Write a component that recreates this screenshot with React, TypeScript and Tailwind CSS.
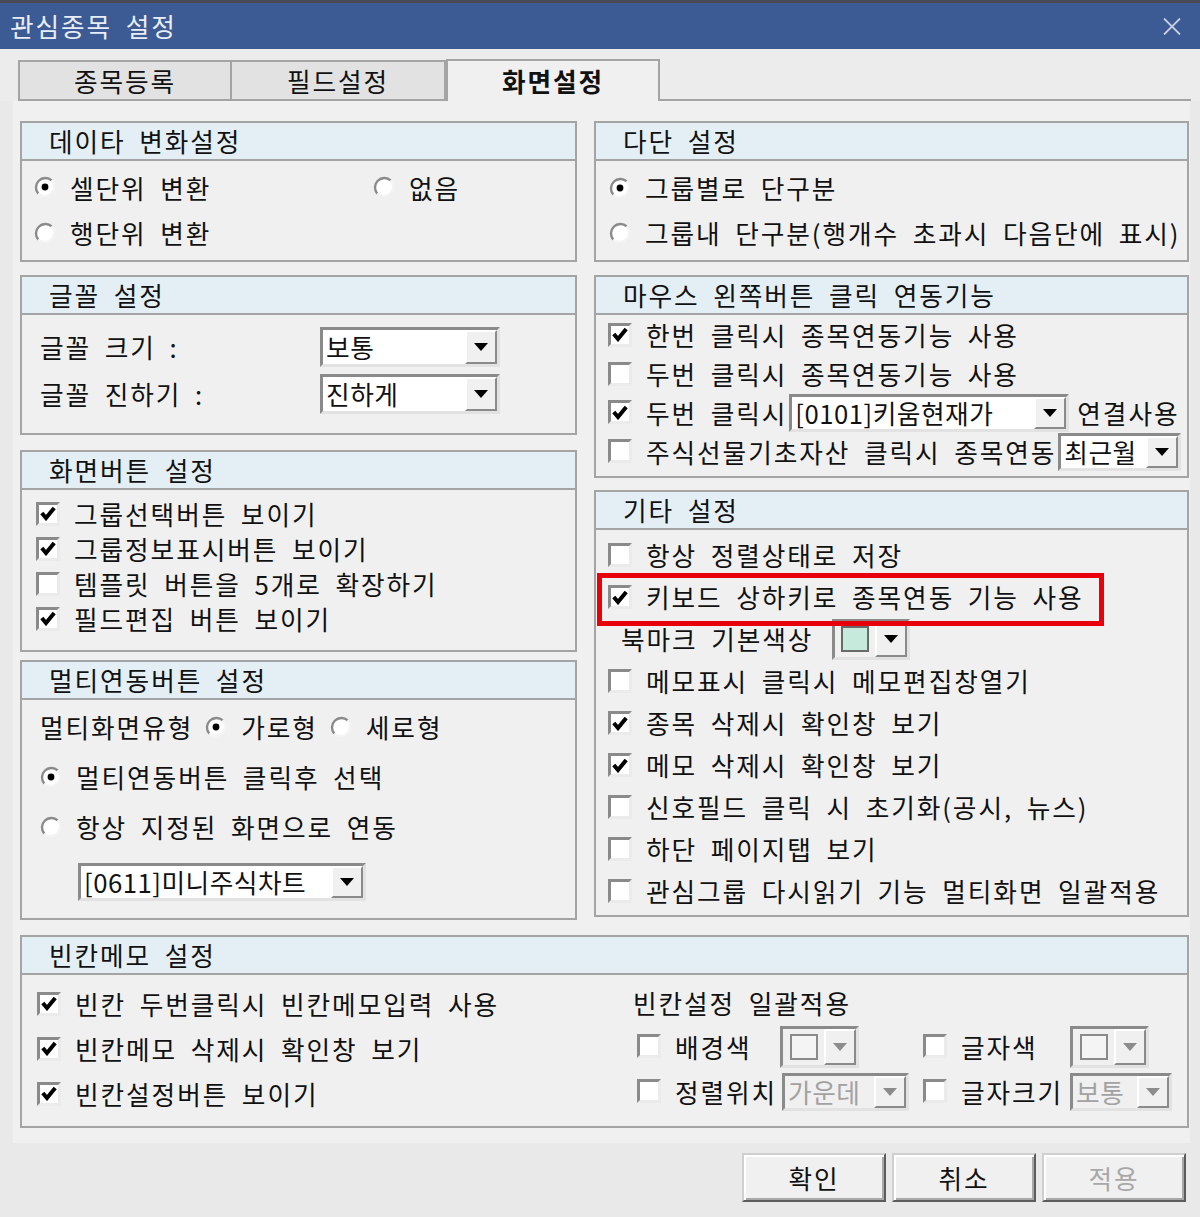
import React from "react";

type Kids = { children?: React.ReactNode };

const Check = ({ on }: { on?: boolean }) => (
  <span className="w-[24px] h-[24px] shrink-0 bg-white border-[3px] border-t-[#8a8a8a] border-l-[#8a8a8a] border-r-[#ebebeb] border-b-[#ebebeb] flex items-center justify-center">
    {on && (
      <svg width="16" height="15" viewBox="0 0 16 15">
        <path d="M1.8 7 L6 12 L14.2 2" stroke="#000" strokeWidth="4" fill="none" />
      </svg>
    )}
  </span>
);

const Radio = ({ on }: { on?: boolean }) => (
  <svg width="22" height="22" viewBox="0 0 22 22" className="shrink-0">
    <circle cx="11" cy="11" r="9.5" fill="#fff" />
    <path d="M4.3 17.7 A9.5 9.5 0 0 1 17.7 4.3" stroke="#8a8a8a" strokeWidth="2.4" fill="none" />
    <path d="M17.7 4.3 A9.5 9.5 0 0 1 4.3 17.7" stroke="#f4f4f4" strokeWidth="2.2" fill="none" />
    {on && <circle cx="11" cy="11" r="3.4" fill="#000" />}
  </svg>
);

const Arrow = ({ gray }: { gray?: boolean }) => (
  <svg width="14" height="8" viewBox="0 0 14 8">
    <path d="M0 0 H14 L7 8 Z" fill={gray ? "#8c8c8c" : "#000"} />
  </svg>
);

const DropBtn = ({ gray, w = "w-[32px]" }: { gray?: boolean; w?: string }) => (
  <div
    className={`${w} shrink-0 flex items-center justify-center bg-[#f0f0f0] border-2 border-t-white border-l-white border-r-[#8a8a8a] border-b-[#8a8a8a]`}
  >
    <Arrow gray={gray} />
  </div>
);

function Combo({ value, className, disabled }: { value: string; className: string; disabled?: boolean }) {
  return (
    <div
      className={`flex shrink-0 border-[3px] border-t-[#8a8a8a] border-l-[#8a8a8a] border-r-[#e2e2e2] border-b-[#e2e2e2] ${
        disabled ? "bg-[#f0f0f0] text-[#a2a2a2]" : "bg-white"
      } ${className}`}
    >
      <div className="flex-1 min-w-0 flex items-center pl-[3px] whitespace-nowrap tracking-[0.5px] [word-spacing:0px]">{value}</div>
      <DropBtn gray={disabled} />
    </div>
  );
}

function ColorCombo({ swatch, className, gray }: { swatch: string; className: string; gray?: boolean }) {
  return (
    <div
      className={`flex shrink-0 bg-[#f0f0f0] border-[3px] border-t-[#8a8a8a] border-l-[#8a8a8a] border-r-[#e2e2e2] border-b-[#e2e2e2] ${className}`}
    >
      <div className="flex-1 flex items-center justify-center">
        <span className={`w-[28px] h-[26px] border-2 ${swatch}`} />
      </div>
      <DropBtn gray={gray} />
    </div>
  );
}

const CheckRow = ({ on, children, className = "" }: { on?: boolean; className?: string } & Kids) => (
  <div className={`flex items-center ${className}`}>
    <Check on={on} />
    <span className="ml-[14px] whitespace-nowrap">{children}</span>
  </div>
);

const RadioRow = ({ on, children, className = "" }: { on?: boolean; className?: string } & Kids) => (
  <div className={`flex items-center ${className}`}>
    <Radio on={on} />
    <span className="ml-[14px] whitespace-nowrap">{children}</span>
  </div>
);

function Group({ title, className = "", body = "", children }: { title: string; className?: string; body?: string } & Kids) {
  return (
    <div className={`border-2 border-[#a4a4a4] flex flex-col shrink-0 ${className}`}>
      <div className="h-[38px] shrink-0 bg-[#e4eff5] border-b-2 border-[#a4a4a4] flex items-center pl-[27px]">{title}</div>
      <div className={`flex-1 flex flex-col ${body}`}>{children}</div>
    </div>
  );
}

function Btn({ label, disabled }: { label: string; disabled?: boolean }) {
  return (
    <div
      className={`w-[144px] h-[49px] flex items-center justify-center bg-[#f0f0f0] border-2 border-t-[#cfcfcf] border-l-[#cfcfcf] border-r-[#5c5c5c] border-b-[#5c5c5c] shadow-[inset_2px_2px_0_#ffffff,inset_-2px_-2px_0_#a8a8a8] ${
        disabled ? "text-[#a8a8a8]" : ""
      }`}
    >
      {label}
    </div>
  );
}

export default function App() {
  return (
    <div className="w-[1200px] h-[1217px] overflow-hidden bg-[#e9e9e9] text-[#111] text-[25.7px] leading-none tracking-[1.9px] [word-spacing:6px] font-['Noto_Sans_CJK_KR',sans-serif] flex flex-col">
      {/* title bar */}
      <div className="h-[49px] shrink-0 border-t-[3px] border-[#4a4a56] bg-[#3c5a94] flex items-center justify-between pl-[10px] pr-[19px]">
        <span className="text-[#e8edf6]">관심종목 설정</span>
        <svg width="18" height="17" viewBox="0 0 18 17">
          <path d="M1 0.5 L17 16.5 M17 0.5 L1 16.5" stroke="#c7d0e2" strokeWidth="1.8" />
        </svg>
      </div>

      {/* tabs */}
      <div className="h-[52px] shrink-0 flex items-end pl-[18px] bg-[#ececec]">
        <div className="w-[214px] h-[41px] bg-[#e2e2e2] border-2 border-[#a4a4a4] flex items-center justify-center">종목등록</div>
        <div className="w-[214px] h-[41px] bg-[#e2e2e2] border-2 border-l-0 border-[#a4a4a4] flex items-center justify-center">필드설정</div>
        <div className="w-[214px] h-[42px] bg-[#f0f0f0] border-2 border-b-0 border-[#a4a4a4] flex items-center justify-center font-bold">
          화면설정
        </div>
        <div className="flex-1 mr-[9px] border-b-2 border-[#a4a4a4]" />
      </div>

      {/* page */}
      <div className="ml-[13px] w-[1177px] bg-[#f0f0f0] pt-[20px] pl-[7px] pb-[15px] flex flex-col">
        <div className="flex gap-[17px]">
          {/* left column */}
          <div className="w-[557px] flex flex-col">
            <Group title="데이타 변화설정" className="h-[141px]" body="pt-[4px] pl-[12px]">
              <div className="h-[45px] flex items-center">
                <RadioRow on className="w-[339px]">셀단위 변환</RadioRow>
                <RadioRow>없음</RadioRow>
              </div>
              <RadioRow className="h-[45px]">행단위 변환</RadioRow>
            </Group>

            <Group title="글꼴 설정" className="h-[160px] mt-[13px]" body="pt-[8px] pl-[18px]">
              <div className="h-[47px] flex items-center">
                <span className="w-[280px]">글꼴 크기 :</span>
                <Combo value="보통" className="w-[180px] h-[40px]" />
              </div>
              <div className="h-[47px] flex items-center">
                <span className="w-[280px]">글꼴 진하기 :</span>
                <Combo value="진하게" className="w-[180px] h-[40px]" />
              </div>
            </Group>

            <Group title="화면버튼 설정" className="h-[202px] mt-[15px]" body="pt-[6px] pl-[14px]">
              <CheckRow on className="h-[35px]">그룹선택버튼 보이기</CheckRow>
              <CheckRow on className="h-[35px]">그룹정보표시버튼 보이기</CheckRow>
              <CheckRow className="h-[35px]">템플릿 버튼을 5개로 확장하기</CheckRow>
              <CheckRow on className="h-[35px]">필드편집 버튼 보이기</CheckRow>
            </Group>

            <Group title="멀티연동버튼 설정" className="h-[260px] mt-[8px]" body="pt-[2px] pl-[18px]">
              <div className="h-[50px] flex items-center">
                <span>멀티화면유형</span>
                <span className="ml-[12px]" />
                <RadioRow on>가로형</RadioRow>
                <span className="ml-[12px]" />
                <RadioRow>세로형</RadioRow>
              </div>
              <RadioRow on className="h-[50px]">멀티연동버튼 클릭후 선택</RadioRow>
              <RadioRow className="h-[50px]">항상 지정된 화면으로 연동</RadioRow>
              <Combo value="[0611]미니주식차트" className="w-[288px] h-[38px] mt-[11px] ml-[38px]" />
            </Group>
          </div>

          {/* right column */}
          <div className="w-[595px] flex flex-col">
            <Group title="다단 설정" className="h-[141px]" body="pt-[4px] pl-[13px]">
              <RadioRow on className="h-[45px]">그룹별로 단구분</RadioRow>
              <RadioRow className="h-[45px]">그룹내 단구분(행개수 초과시 다음단에 표시)</RadioRow>
            </Group>

            <Group title="마우스 왼쪽버튼 클릭 연동기능" className="h-[203px] mt-[13px]" body="pl-[12px]">
              <CheckRow on className="h-[39px]">한번 클릭시 종목연동기능 사용</CheckRow>
              <CheckRow className="h-[39px]">두번 클릭시 종목연동기능 사용</CheckRow>
              <div className="h-[39px] flex items-center">
                <CheckRow on>두번 클릭시</CheckRow>
                <Combo value="[0101]키움현재가" className="w-[280px] h-[38px] ml-[2px]" />
                <span className="ml-[8px] whitespace-nowrap">연결사용</span>
              </div>
              <div className="h-[39px] flex items-center">
                <CheckRow>주식선물기초자산 클릭시 종목연동</CheckRow>
                <Combo value="최근월" className="w-[123px] h-[38px] ml-[2px]" />
              </div>
            </Group>

            <Group title="기타 설정" className="h-[427px] mt-[12px]" body="pt-[4px] pl-[12px]">
              <CheckRow className="h-[42px]">항상 정렬상태로 저장</CheckRow>
              <div className="h-[42px] relative">
                <CheckRow on className="h-full">키보드 상하키로 종목연동 기능 사용</CheckRow>
                <div className="absolute left-[-11px] top-[-3px] w-[507px] h-[53px] border-[5px] border-[#e8000b]" />
              </div>
              <div className="h-[42px] flex items-center pl-[13px]">
                <span className="w-[211px] whitespace-nowrap">북마크 기본색상</span>
                <ColorCombo swatch="bg-[#c6eadb] border-[#6a6a6a]" className="w-[78px] h-[41px]" />
              </div>
              <CheckRow className="h-[42px]">메모표시 클릭시 메모편집창열기</CheckRow>
              <CheckRow on className="h-[42px]">종목 삭제시 확인창 보기</CheckRow>
              <CheckRow on className="h-[42px]">메모 삭제시 확인창 보기</CheckRow>
              <CheckRow className="h-[42px]">신호필드 클릭 시 초기화(공시, 뉴스)</CheckRow>
              <CheckRow className="h-[42px]">하단 페이지탭 보기</CheckRow>
              <CheckRow className="h-[42px]">관심그룹 다시읽기 기능 멀티화면 일괄적용</CheckRow>
            </Group>
          </div>
        </div>

        {/* bottom group */}
        <Group title="빈칸메모 설정" className="h-[193px] mt-[15px] w-[1169px]" body="pt-[6px] pl-[15px]">
          <div className="flex">
            <div className="w-[596px] flex flex-col">
              <CheckRow on className="h-[45px]">빈칸 두번클릭시 빈칸메모입력 사용</CheckRow>
              <CheckRow on className="h-[45px]">빈칸메모 삭제시 확인창 보기</CheckRow>
              <CheckRow on className="h-[45px]">빈칸설정버튼 보이기</CheckRow>
            </div>
            <div className="flex flex-col">
              <div className="h-[43px] flex items-center">빈칸설정 일괄적용</div>
              <div className="h-[45px] grid grid-cols-[147px_143px_147px_auto] items-center">
                <CheckRow className="pl-[4px]">배경색</CheckRow>
                <ColorCombo swatch="bg-[#f4f4f4] border-[#8a8a8a]" gray className="w-[79px] h-[42px]" />
                <CheckRow>글자색</CheckRow>
                <ColorCombo swatch="bg-[#f4f4f4] border-[#8a8a8a]" gray className="w-[79px] h-[42px]" />
              </div>
              <div className="h-[45px] grid grid-cols-[147px_143px_147px_auto] items-center">
                <CheckRow className="pl-[4px]">정렬위치</CheckRow>
                <Combo value="가운데" disabled className="w-[127px] h-[38px] ml-[2px]" />
                <CheckRow>글자크기</CheckRow>
                <Combo value="보통" disabled className="w-[102px] h-[38px]" />
              </div>
            </div>
          </div>
        </Group>
      </div>

      {/* buttons */}
      <div className="flex justify-end gap-[6px] pr-[14px] pt-[10px]">
        <Btn label="확인" />
        <Btn label="취소" />
        <Btn label="적용" disabled />
      </div>
    </div>
  );
}
